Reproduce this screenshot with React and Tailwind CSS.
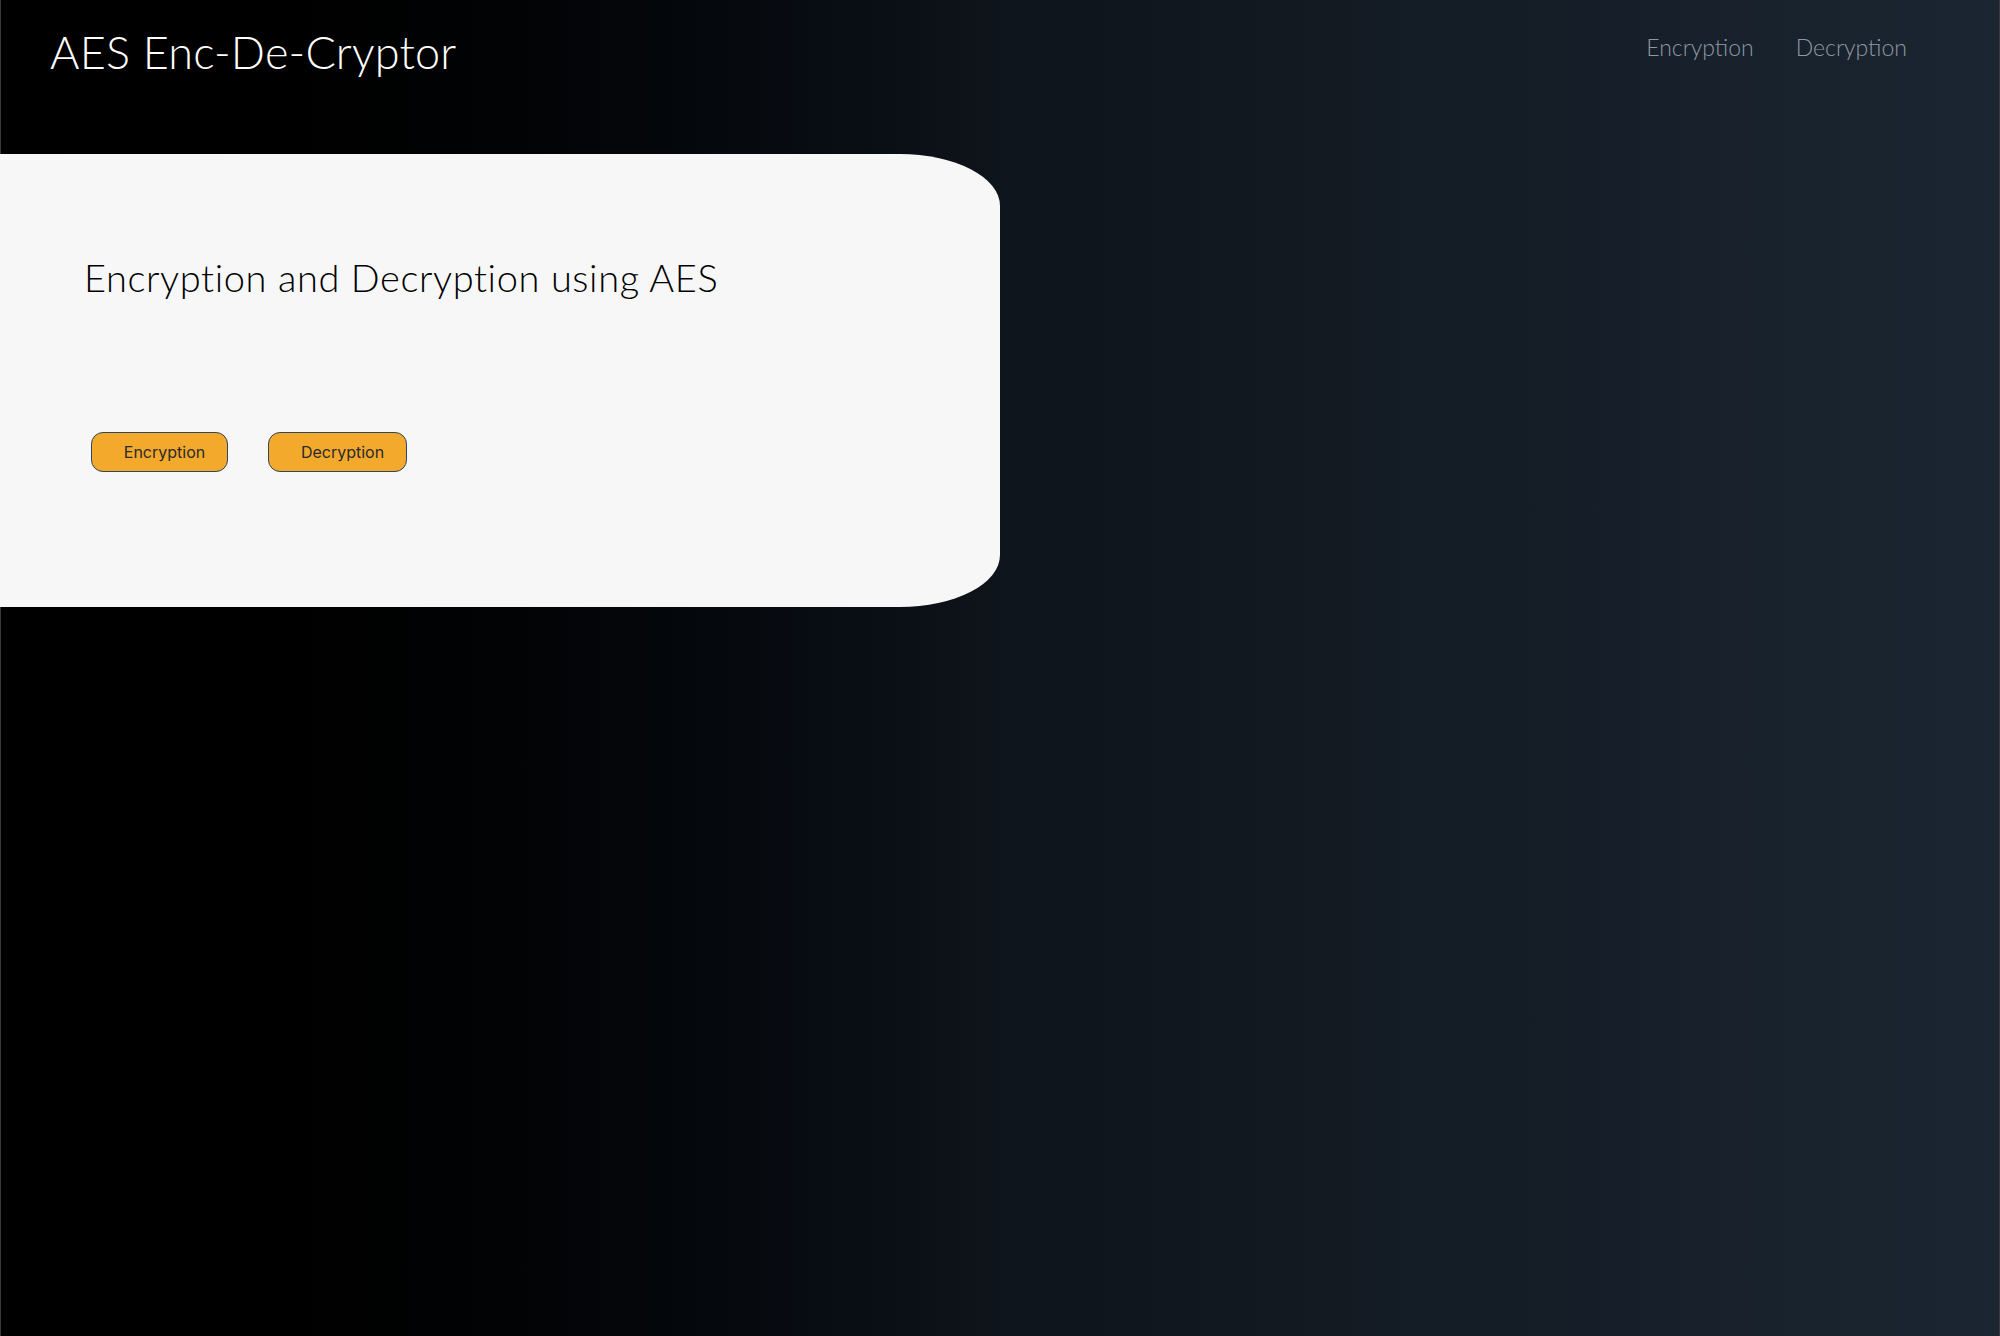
import React from 'react';

export default function App() {
  return (
    <div className="h-[1336px] w-full border-x border-[#3a3a3a] bg-gradient-to-r from-[#000000] via-[#0e141b] to-[#1b2632] font-['Lato','Noto_Sans',sans-serif]">
      {/* header */}
      <header className="flex items-start justify-between pl-[49px] pr-[92px] pt-[22px]">
        <h1 className="text-[45px] font-light leading-[60px] text-white tracking-[0.2px]">AES Enc-De-Cryptor</h1>
        <nav className="flex items-center gap-[42px] text-[23px] font-light text-[#8f98a2]">
          <a href="#" className="leading-[50px]">Encryption</a>
          <a href="#" className="leading-[50px]">Decryption</a>
        </nav>
      </header>

      {/* hero card */}
      <section className="relative -ml-px mt-[72px] h-[453px] w-[1000px] rounded-tr-[100px_52px] rounded-br-[100px_52px] bg-[#f7f7f7] pl-[84px] pt-[98px]">
        <h2 className="text-[38px] font-light leading-[50px] text-black tracking-[0.6px]">
          Encryption and Decryption using AES
        </h2>
        <div className="mt-[130px] flex gap-[40px] pl-[7px]">
          <button className="h-[40px] w-[137px] rounded-[12px] border border-[#2c4663] bg-[#f3a92c] pl-[10px] font-['Inter',sans-serif] text-[16px] text-[#2a2a2a]">
            Encryption
          </button>
          <button className="h-[40px] w-[139px] rounded-[12px] border border-[#2c4663] bg-[#f3a92c] pl-[10px] font-['Inter',sans-serif] text-[16px] text-[#2a2a2a]">
            Decryption
          </button>
        </div>
      </section>
    </div>
  );
}
